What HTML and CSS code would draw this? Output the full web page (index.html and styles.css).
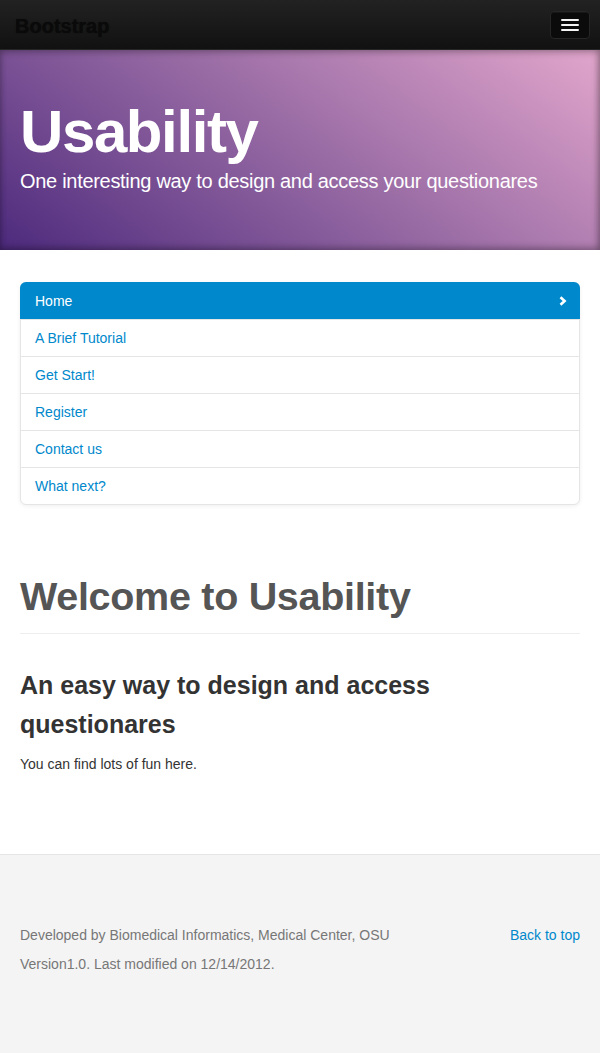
FILE: index.html
```html
<!DOCTYPE html>
<html lang="en">
<head>
<meta charset="utf-8">
<title>Usability</title>
<link rel="stylesheet" href="styles.css">
</head>
<body>
<header class="navbar">
  <a class="brand" href="#">Bootstrap</a>
  <button class="btn-navbar" type="button" aria-label="Toggle navigation">
    <span class="icon-bar"></span>
    <span class="icon-bar"></span>
    <span class="icon-bar"></span>
  </button>
</header>

<section class="hero">
  <h1 class="hero-title">Usability</h1>
  <p class="hero-lead">One interesting way to design and access your questionares</p>
</section>

<main class="container">
  <ul class="nav-list">
    <li class="nav-item active"><a href="#">Home</a>
      <svg class="chevron" width="8" height="10" viewBox="0 0 8 10" aria-hidden="true"><path d="M1.5 1.2 L5.6 5 L1.5 8.8" fill="none" stroke="#fff" stroke-width="2.6" stroke-linejoin="miter"/></svg>
    </li>
    <li class="nav-item"><a href="#">A Brief Tutorial</a></li>
    <li class="nav-item"><a href="#">Get Start!</a></li>
    <li class="nav-item"><a href="#">Register</a></li>
    <li class="nav-item"><a href="#">Contact us</a></li>
    <li class="nav-item"><a href="#">What next?</a></li>
  </ul>

  <div class="page-header">
    <h1 class="welcome">Welcome to Usability</h1>
  </div>
  <h2 class="subhead">An easy way to design and access questionares</h2>
  <p class="body-text">You can find lots of fun here.</p>
</main>

<footer class="footer">
  <div class="footer-inner">
    <div class="footer-row">
      <p class="footer-text">Developed by Biomedical Informatics, Medical Center, OSU</p>
      <a class="back-top" href="#">Back to top</a>
    </div>
    <p class="footer-text">Version1.0. Last modified on 12/14/2012.</p>
  </div>
</footer>
</body>
</html>
```

FILE: styles.css
```css
html, body {
  margin: 0;
  padding: 0;
}
body {
  font-family: "Liberation Sans", Arial, sans-serif;
  font-size: 14px;
  line-height: 20px;
  color: #333;
  background: #fff;
  min-height: 1053px;
  display: flex;
  flex-direction: column;
}
a {
  color: #0088cc;
  text-decoration: none;
}

/* Navbar */
.navbar {
  height: 50px;
  box-sizing: border-box;
  display: flex;
  align-items: center;
  justify-content: space-between;
  padding: 0 10px 0 15px;
  background: linear-gradient(to bottom, #222 0%, #111 100%);
  border-bottom: 1px solid #252525;
}
.brand {
  color: #0a0a0a;
  font-weight: bold;
  font-size: 20px;
  line-height: 20px;
  margin-top: 2px;
  text-shadow: 0 0 1px rgba(0,0,0,0.6);
}
.btn-navbar {
  width: 40px;
  height: 28px;
  box-sizing: border-box;
  padding: 0;
  background: #0b0b0b;
  border: 1px solid #262626;
  border-radius: 4px;
  display: flex;
  flex-direction: column;
  align-items: center;
  justify-content: center;
  gap: 3px;
  box-shadow: inset 0 1px 0 rgba(255,255,255,0.05);
}
.icon-bar {
  display: block;
  width: 18px;
  height: 2px;
  background: #f5f5f5;
  border-radius: 1px;
}

/* Hero */
.hero {
  height: 200px;
  box-sizing: border-box;
  padding: 52px 20px 0;
  color: #fff;
  background: linear-gradient(36deg, #4d2a7d 0%, #9669a3 50%, #e2a6cc 100%);
  box-shadow: inset 0 3px 7px rgba(0,0,0,0.2), inset 0 -3px 7px rgba(0,0,0,0.22), inset -4px 0 6px rgba(0,0,0,0.1);
}
.hero-title {
  margin: 0;
  font-size: 60px;
  line-height: 60px;
  font-weight: bold;
  letter-spacing: -1.4px;
}
.hero-lead {
  margin: 4px 0 0;
  font-size: 20px;
  line-height: 30px;
  letter-spacing: -0.3px;
}

/* Container */
.container {
  padding: 0 20px;
}
.nav-list {
  list-style: none;
  margin: 32px 0 0;
  padding: 0;
  border: 1px solid #e5e5e5;
  border-radius: 6px;
  background: #fff;
  box-shadow: 0 1px 4px rgba(0,0,0,0.065);
}
.nav-item {
  display: flex;
  align-items: center;
  justify-content: space-between;
  padding: 8px 12px 8px 14px;
  border-top: 1px solid #e5e5e5;
}
.nav-item:first-child {
  border-top: 0;
  border-radius: 6px 6px 0 0;
  margin: -1px -1px 0;
  padding: 9px 13px 8px 15px;
}
.nav-item.active {
  background: #0088cc;
}
.nav-item.active a {
  color: #fff;
}
.chevron {
  display: block;
}

/* Content */
.page-header {
  margin: 71px 0 32px;
  padding-bottom: 9px;
  border-bottom: 1px solid #eee;
}
.welcome {
  margin: 13px 0 8px;
  font-size: 39.5px;
  line-height: 40px;
  font-weight: bold;
  color: #555;
  letter-spacing: -0.3px;
}
.subhead {
  margin: 0 0 10px;
  font-size: 25px;
  line-height: 39px;
  font-weight: bold;
  color: #333;
  max-width: 440px;
}
.body-text {
  margin: 0 0 10px;
}

/* Footer */
.footer {
  margin-top: 70px;
  border-top: 1px solid #e5e5e5;
  background: #f4f4f4;
  padding: 70px 20px 0;
  flex: 1 0 auto;
}
.footer-row {
  display: flex;
  justify-content: space-between;
}
.footer-text {
  margin: 0 0 9px;
  color: #777;
}
.back-top {
  color: #0088cc;
}
```
